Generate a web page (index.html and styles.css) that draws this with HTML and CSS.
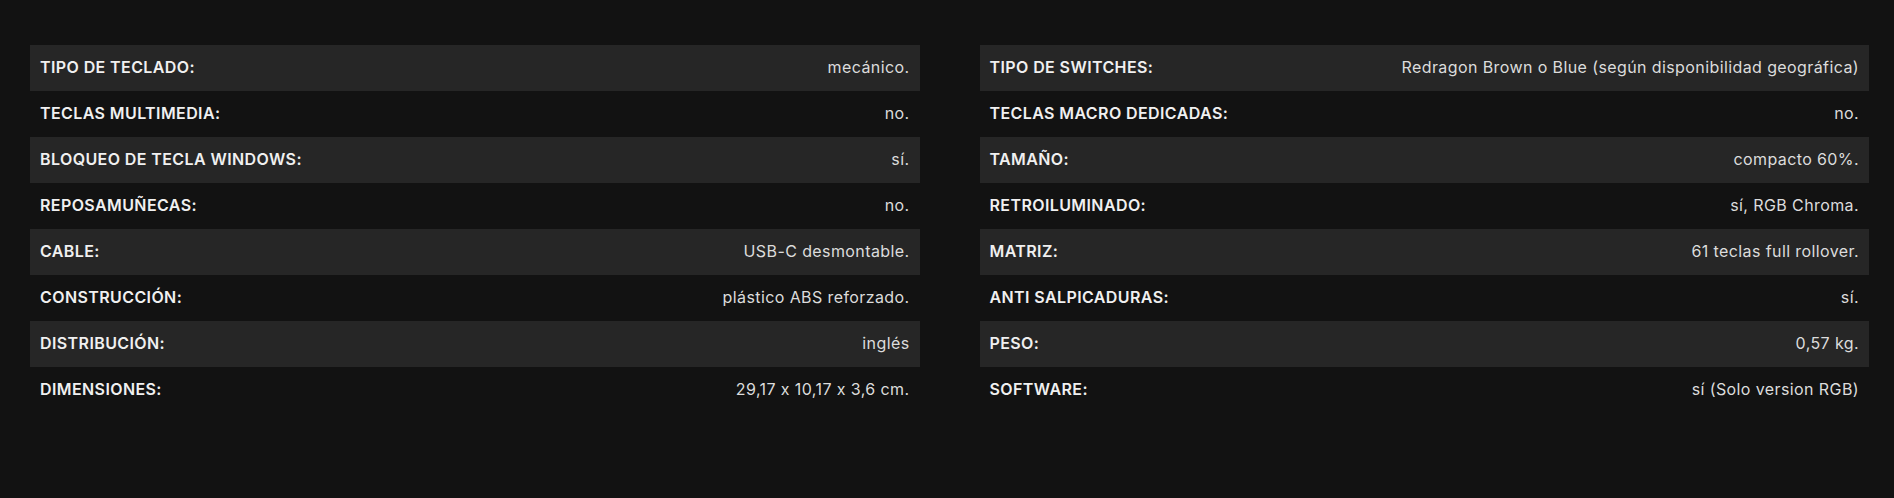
FILE: index.html
```html
<!DOCTYPE html>
<html lang="es">
<head>
<meta charset="utf-8">
<title>Especificaciones</title>
<link rel="stylesheet" href="styles.css">
</head>
<body>
<section class="specs">
  <div class="spec-table">
    <div class="row"><span class="label">TIPO DE TECLADO:</span><span class="value">mecánico.</span></div>
    <div class="row"><span class="label">TECLAS MULTIMEDIA:</span><span class="value">no.</span></div>
    <div class="row"><span class="label">BLOQUEO DE TECLA WINDOWS:</span><span class="value">sí.</span></div>
    <div class="row"><span class="label">REPOSAMUÑECAS:</span><span class="value">no.</span></div>
    <div class="row"><span class="label">CABLE:</span><span class="value">USB-C desmontable.</span></div>
    <div class="row"><span class="label">CONSTRUCCIÓN:</span><span class="value">plástico ABS reforzado.</span></div>
    <div class="row"><span class="label">DISTRIBUCIÓN:</span><span class="value">inglés</span></div>
    <div class="row"><span class="label">DIMENSIONES:</span><span class="value">29,17 x 10,17 x 3,6 cm.</span></div>
  </div>
  <div class="spec-table">
    <div class="row"><span class="label">TIPO DE SWITCHES:</span><span class="value">Redragon Brown o Blue (según disponibilidad geográfica)</span></div>
    <div class="row"><span class="label">TECLAS MACRO DEDICADAS:</span><span class="value">no.</span></div>
    <div class="row"><span class="label">TAMAÑO:</span><span class="value">compacto 60%.</span></div>
    <div class="row"><span class="label">RETROILUMINADO:</span><span class="value">sí, RGB Chroma.</span></div>
    <div class="row"><span class="label">MATRIZ:</span><span class="value">61 teclas full rollover.</span></div>
    <div class="row"><span class="label">ANTI SALPICADURAS:</span><span class="value">sí.</span></div>
    <div class="row"><span class="label">PESO:</span><span class="value">0,57 kg.</span></div>
    <div class="row"><span class="label">SOFTWARE:</span><span class="value">sí (Solo version RGB)</span></div>
  </div>
</section>
</body>
</html>
```
FILE: styles.css
```css
html, body {
  margin: 0;
  padding: 0;
  background: #121212;
}
body {
  font-family: Inter, "Open Sans", sans-serif;
  color: #e6e6e6;
}
.specs {
  display: flex;
  gap: 60px;
  padding: 45px 25px 0 30px;
}
.spec-table {
  flex: 1;
  display: flex;
  flex-direction: column;
}
.row {
  height: 46px;
  box-sizing: border-box;
  display: flex;
  align-items: center;
  justify-content: space-between;
  padding: 0 10px 2px;
  font-size: 16px;
  line-height: 20px;
}
.row:nth-child(odd) {
  background: #262626;
}
.label {
  font-weight: 600;
  color: #f0f0f0;
  letter-spacing: 0.4px;
}
.value {
  font-weight: 400;
  color: #dcdcdc;
  text-align: right;
  letter-spacing: 0.4px;
}
```
